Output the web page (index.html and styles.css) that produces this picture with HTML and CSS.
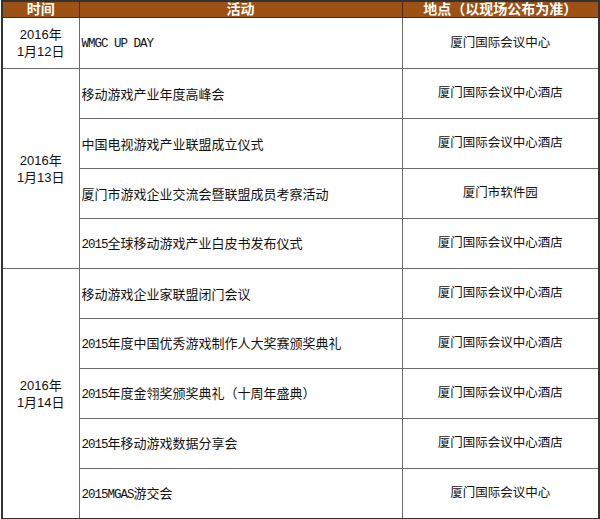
FILE: index.html
```html
<!DOCTYPE html>
<html lang="zh">
<head>
<meta charset="utf-8">
<link rel="stylesheet" href="styles.css">
</head>
<body>
<table class="sched">
  <colgroup><col class="c1"><col class="c2"><col class="c3"></colgroup>
  <thead>
    <tr class="head"><th>时间</th><th>活动</th><th>地点（以现场公布为准）</th></tr>
  </thead>
  <tbody>
    <tr class="first">
      <td class="date">2016年<br>1月12日</td>
      <td class="act"><span class="lat">WMGC UP DAY</span></td>
      <td class="place">厦门国际会议中心</td>
    </tr>
    <tr>
      <td class="date" rowspan="4">2016年<br>1月13日</td>
      <td class="act">移动游戏产业年度高峰会</td>
      <td class="place">厦门国际会议中心酒店</td>
    </tr>
    <tr>
      <td class="act">中国电视游戏产业联盟成立仪式</td>
      <td class="place">厦门国际会议中心酒店</td>
    </tr>
    <tr>
      <td class="act">厦门市游戏企业交流会暨联盟成员考察活动</td>
      <td class="place">厦门市软件园</td>
    </tr>
    <tr>
      <td class="act"><span class="lat">2015</span>全球移动游戏产业白皮书发布仪式</td>
      <td class="place">厦门国际会议中心酒店</td>
    </tr>
    <tr>
      <td class="date" rowspan="5">2016年<br>1月14日</td>
      <td class="act">移动游戏企业家联盟闭门会议</td>
      <td class="place">厦门国际会议中心酒店</td>
    </tr>
    <tr>
      <td class="act"><span class="lat">2015</span>年度中国优秀游戏制作人大奖赛颁奖典礼</td>
      <td class="place">厦门国际会议中心酒店</td>
    </tr>
    <tr>
      <td class="act"><span class="lat">2015</span>年度金翎奖颁奖典礼（十周年盛典）</td>
      <td class="place">厦门国际会议中心酒店</td>
    </tr>
    <tr>
      <td class="act"><span class="lat">2015</span>年移动游戏数据分享会</td>
      <td class="place">厦门国际会议中心酒店</td>
    </tr>
    <tr>
      <td class="act"><span class="lat">2015MGAS</span>游交会</td>
      <td class="place">厦门国际会议中心</td>
    </tr>
  </tbody>
</table>
</body>
</html>
```
FILE: styles.css
```css
html, body {
  margin: 0;
  padding: 0;
  background: #ffffff;
}
body {
  padding: 0 0 0 1px;
  font-family: "Liberation Sans", "Noto Sans CJK SC", sans-serif;
  color: #111;
}
.sched {
  border-collapse: collapse;
  table-layout: fixed;
  width: 597px;
  border: 2px solid #333;
}
.c1 { width: 77px; }
.c2 { width: 323px; }
.c3 { width: 197px; }
.sched th, .sched td {
  border: 1px solid #6a6a6a;
  padding: 0;
}
.head th {
  height: 15px;
  background: #9e5114;
  color: #ffffff;
  font-weight: bold;
  font-size: 14px;
  line-height: 15px;
  text-align: center;
  border-color: #4a2a10;
}
.sched td {
  height: 49px;
  font-size: 13px;
  line-height: 17px;
  vertical-align: middle;
}
.sched tr.first td { height: 50px; }
.date { text-align: center; }
.act {
  text-align: left;
  padding-left: 2px !important;
  font-family: "Noto Sans CJK SC", sans-serif;
  font-size: 13px;
}
.lat {
  font-family: "Liberation Mono", monospace;
  font-size: 12.5px;
  letter-spacing: -1px;
}
.place { text-align: center; font-size: 12.5px !important; }
```
